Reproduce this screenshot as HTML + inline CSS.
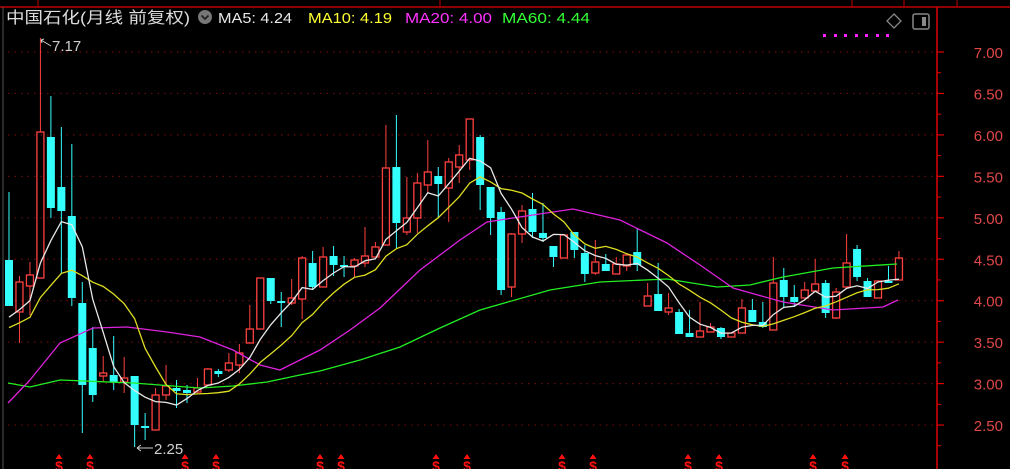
<!DOCTYPE html>
<html><head><meta charset="utf-8"><style>
html,body{margin:0;padding:0;background:#000;overflow:hidden}
svg{display:block}
</style></head><body>
<svg id="s" width="1010" height="469" xmlns="http://www.w3.org/2000/svg" font-family="Liberation Sans, Noto Sans CJK SC, sans-serif">
<rect width="1010" height="469" fill="#000"/>
<line x1="0" y1="7" x2="1010" y2="7" stroke="#c00000" stroke-width="1.5"/>
<line x1="38" y1="0" x2="38" y2="7" stroke="#c00000"/>
<line x1="440" y1="0" x2="440" y2="7" stroke="#c00000"/>
<line x1="852" y1="0" x2="852" y2="7" stroke="#c00000"/>
<line x1="904" y1="0" x2="904" y2="7" stroke="#c00000"/>
<line x1="957" y1="0" x2="957" y2="7" stroke="#c00000"/>
<line x1="3" y1="7" x2="3" y2="469" stroke="#555" stroke-width="1"/>
<line x1="937" y1="7" x2="937" y2="469" stroke="#e00000" stroke-width="1.5"/>
<g id="grid"></g>
<g id="cand"></g>
<g id="ma"></g>
<text x="6" y="23" font-size="16" fill="#dcdcdc" textLength="184" lengthAdjust="spacingAndGlyphs">中国石化(月线 前复权)</text>
<circle cx="205" cy="17" r="7" fill="#777"/>
<path d="M201.5 15.5 L205 19 L208.5 15.5" stroke="#222" stroke-width="1.8" fill="none"/>
<text x="218" y="23" font-size="15" fill="#e8e8e8" textLength="74" lengthAdjust="spacingAndGlyphs">MA5: 4.24</text>
<text x="308" y="23" font-size="15" fill="#ffff33" textLength="84" lengthAdjust="spacingAndGlyphs">MA10: 4.19</text>
<text x="405" y="23" font-size="15" fill="#ff33ff" textLength="87" lengthAdjust="spacingAndGlyphs">MA20: 4.00</text>
<text x="502" y="23" font-size="15" fill="#33ff33" textLength="88" lengthAdjust="spacingAndGlyphs">MA60: 4.44</text>
<path d="M894 14 L901 21 L894 28 L887 21 Z" stroke="#888" stroke-width="1.3" fill="none"/>
<rect x="913" y="14" width="16" height="15" rx="2" stroke="#888" stroke-width="1.5" fill="none"/>
<rect x="922" y="17" width="4" height="9" fill="#888"/>
<g fill="#ff22ff">
<rect x="823" y="34" width="3" height="3"/><rect x="834" y="34" width="3" height="3"/><rect x="844" y="34" width="3" height="3"/><rect x="855" y="34" width="3" height="3"/><rect x="865" y="34" width="3" height="3"/><rect x="876" y="34" width="3" height="3"/><rect x="886" y="34" width="3" height="3"/>
</g>
<text x="52" y="51" font-size="15" fill="#cfcfcf">7.17</text>
<path d="M41 40 L51 46 M41 40 L44 39 M41 40 L42 43" stroke="#cfcfcf" stroke-width="1" fill="none"/>
<text x="154" y="454" font-size="15" fill="#cfcfcf">2.25</text>
<path d="M137 448 L153 448 M137 448 L141 445 M137 448 L141 451" stroke="#cfcfcf" stroke-width="1" fill="none"/>
<g id="marks"></g>
</svg>
<script>
var NS="http://www.w3.org/2000/svg";
function el(p,t,a,txt){var e=document.createElementNS(NS,t);for(var k in a)e.setAttribute(k,a[k]);if(txt!=null)e.textContent=txt;p.appendChild(e);return e;}
function Y(p){return 52+(7-p)*82.9;}
var g=document.getElementById('grid');
for(var i=0;i<10;i++){var p=7-i*0.5,y=Y(p);
 el(g,'line',{x1:8,y1:y,x2:935,y2:y,stroke:'#6a0c0c','stroke-dasharray':'1.5 5','stroke-width':1.2});
 el(g,'line',{x1:937,y1:y,x2:944,y2:y,stroke:'#e00000','stroke-width':1.2});
 el(g,'line',{x1:937,y1:y+20.7,x2:941,y2:y+20.7,stroke:'#e00000','stroke-width':1});
 el(g,'text',{x:1003,y:y+6,'font-size':15,fill:'#e04848','text-anchor':'end'},p.toFixed(2));
}
var C=[
[260,306,192,306,0],[282,312,276,343,1],[275,286,262,315,1],[132,278,38,278,1],[137,208,96,218,0],
[187,211,127,273,0],[216,298,144,306,0],[303,385,282,433,0],[348,395,327,402,0],[373,376,356,382,1],
[375,382,336,390,0],[378,382,357,393,1],[376,425,376,447,0],[426,428,413,440,0],[395,430,388,430,1],
[386,395,365,400,1],[388,391,380,408,0],[390,393,385,403,0],[388,392,378,393,1],[369,385,368,385,1],
[371,374,369,377,0],[363,370,353,372,1],[353,365,344,373,1],[329,343,305,343,1],[278,329,278,329,1],
[278,301,278,304,0],[301,303,292,327,0],[298,303,279,305,1],[258,299,256,319,1],[263,287,251,290,0],
[257,287,247,287,1],[256,265,246,276,0],[265,266,256,277,0],[260,266,258,277,1],[256,263,227,267,1],
[247,257,242,257,1],[168,245,125,245,1],[167,223,115,248,0],[218,232,177,235,1],[183,218,173,233,1],
[172,185,140,193,1],[176,184,167,217,0],[162,188,158,222,1],[155,167,145,183,1],[119,160,119,170,1],
[137,185,135,210,0],[187,218,187,235,0],[212,290,207,295,0],[234,287,233,297,1],[211,234,205,243,1],
[209,232,193,238,0],[233,238,203,242,0],[246,257,246,267,0],[235,258,234,258,1],[232,250,232,258,0],
[253,274,245,282,0],[262,273,240,275,1],[264,271,254,271,0],[264,274,257,274,1],[255,266,255,271,1],
[252,265,229,271,0],[296,306,283,306,1],[294,311,263,311,0],[308,312,293,315,1],[312,334,309,334,0],
[333,337,310,337,0],[331,337,302,337,1],[327,332,323,332,1],[328,337,327,339,0],[333,337,332,337,1],
[308,333,299,333,1],[310,322,299,322,0],[322,327,302,328,0],[283,330,257,330,1],[280,297,268,308,0],
[297,302,285,307,0],[290,298,282,298,1],[284,291,259,291,1],[283,313,280,318,0],[292,318,288,319,1],
[263,287,234,287,1],[249,277,245,281,0],[281,297,278,297,0],[281,298,281,298,1],[281,283,266,283,0],
[258,280,251,280,1]];
var cg=document.getElementById('cand'),closes=[];
C.forEach(function(c,i){var x=9+i*10.47,w=7;
 var col=c[4]?'#ff4040':'#33ffff';
 closes.push(c[4]?c[0]:c[1]);
 if(c[4]){
  el(cg,'line',{x1:x,y1:c[2],x2:x,y2:c[0],stroke:col,'stroke-width':1});
  el(cg,'line',{x1:x,y1:c[1],x2:x,y2:c[3],stroke:col,'stroke-width':1});
  el(cg,'rect',{x:x-w/2,y:c[0],width:w,height:Math.max(1,c[1]-c[0]),fill:'none',stroke:col,'stroke-width':1.3});
 }else{
  el(cg,'line',{x1:x,y1:c[2],x2:x,y2:c[3],stroke:col,'stroke-width':1});
  el(cg,'rect',{x:x-w/2-0.5,y:c[0],width:w+1,height:Math.max(2,c[1]-c[0]),fill:col});
 }
});
var mg=document.getElementById('ma');
function poly(pts,col){el(mg,'polyline',{points:pts.map(function(p){return p[0]+','+p[1]}).join(' '),fill:'none',stroke:col,'stroke-width':1.3});}
poly([[8,383],[30,387],[60,380],[133,383],[200,388],[233,386],[267,382],[300,375],[320,371],[360,360],[400,347],[440,328],[480,310],[550,290],[600,282],[667,279],[717,287],[750,285],[783,277],[833,268],[897,264]],'#22ee22');
poly([[8,403],[30,380],[60,343],[93,328],[127,327],[167,332],[200,337],[233,350],[260,365],[280,370],[300,360],[320,350],[350,330],[380,308],[420,270],[460,240],[487,222],[513,218],[573,209],[620,220],[667,243],[700,265],[733,288],[783,302],[833,310],[883,307],[898,300]],'#dd22dd');
function ma(n){var pts=[];for(var i=0;i<closes.length;i++){var s=0,k=0;for(var j=Math.max(0,i-n+1);j<=i;j++){s+=closes[j];k++;}
 if(i<n-1){s+=(n-k)*(n==10?330:320);k=n;} pts.push([9+i*10.47,s/k]);}return pts;}
poly(ma(10),'#dddd22');
poly(ma(5),'#e8e8e8');
var mk=document.getElementById('marks');
[59,90,185,216,320,341,436,467,562,593,688,719,813,845].forEach(function(x){
 el(mk,'path',{d:'M'+(x-3.5)+' 459 L'+x+' 454 L'+(x+3.5)+' 459 Z',fill:'#ff1010'});
 el(mk,'text',{x:x,y:471,'font-size':14,'font-weight':'bold',fill:'#ff1010','text-anchor':'middle'},'$');
});
</script>
</body></html>
